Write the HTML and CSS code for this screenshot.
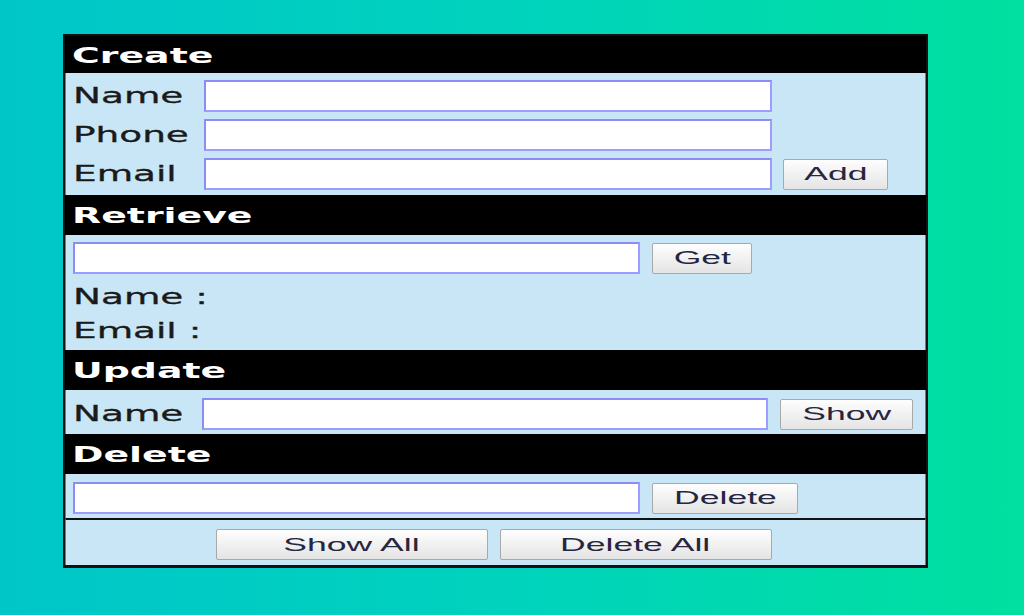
FILE: index.html
```html
<!DOCTYPE html>
<html>
<head>
<meta charset="utf-8">
<title>CRUD</title>
<link rel="stylesheet" href="styles.css">
</head>
<body>
<div class="panel">
  <div class="head"><span class="sx">Create</span></div>
  <div class="body create">
    <div class="row"><label class="lbl"><span class="sx">Name</span></label><input class="field w568" type="text"></div>
    <div class="row"><label class="lbl"><span class="sx">Phone</span></label><input class="field w568" type="text"></div>
    <div class="row"><label class="lbl"><span class="sx">Email</span></label><input class="field w568" type="text"><button class="btn b105"><span class="bx">Add</span></button></div>
  </div>

  <div class="head"><span class="sx">Retrieve</span></div>
  <div class="body retrieve">
    <div class="row"><input class="field w567" type="text"><button class="btn b100"><span class="bx">Get</span></button></div>
    <div class="info"><span class="sx">Name :</span></div>
    <div class="info"><span class="sx">Email :</span></div>
  </div>

  <div class="head"><span class="sx">Update</span></div>
  <div class="body single">
    <div class="row"><label class="lbl lbl2"><span class="sx">Name</span></label><input class="field w566" type="text"><button class="btn b133"><span class="bx">Show</span></button></div>
  </div>

  <div class="head"><span class="sx">Delete</span></div>
  <div class="body single">
    <div class="row"><input class="field w567" type="text"><button class="btn b146"><span class="bx">Delete</span></button></div>
  </div>

  <div class="body footer">
    <button class="btn b272"><span class="bx">Show All</span></button>
    <button class="btn b272"><span class="bx">Delete All</span></button>
  </div>
</div>
</body>
</html>
```
FILE: styles.css
```css
html, body {
  margin: 0;
  padding: 0;
  height: 100%;
}
body {
  background: linear-gradient(90deg, #00c6c9 0%, #00d3bd 50%, #00e09f 100%);
  font-family: "DejaVu Sans", sans-serif;
  overflow: hidden;
}
.panel {
  box-sizing: border-box;
  width: 865px;
  margin: 34px 0 0 63px;
  border: 2px solid #111;
  border-bottom-width: 3px;
  background: #c8e6f5;
}
.head {
  background: #000;
  color: #fff;
  font-weight: bold;
  font-size: 22px;
  height: 40px;
  display: flex;
  align-items: center;
  padding-left: 7px;
  box-sizing: border-box;
}
.panel > .head:first-child {
  height: 37px;
  padding-top: 2px;
}
.sx {
  display: inline-block;
  transform: scaleX(1.7);
  transform-origin: left center;
  white-space: nowrap;
}
.head .sx {
  transform: scaleX(1.72);
}
.body {
  background: #c8e6f5;
  padding-left: 7px;
  border-left: 1px solid #6b7d86;
  border-right: 1px solid #6b7d86;
}
.create {
  padding-top: 7px;
  padding-bottom: 5px;
  display: flex;
  flex-direction: column;
  gap: 7px;
}
.row {
  display: flex;
  align-items: center;
  height: 32px;
}
.lbl {
  width: 131px;
  font-size: 22px;
  color: #1a1a1a;
  line-height: 32px;
  -webkit-text-stroke: 0.3px #1a1a1a;
}
.lbl2 {
  width: 129px;
}
.field {
  box-sizing: border-box;
  height: 32px;
  margin: 0;
  border: 2px solid #9d9dff;
  border-top-color: #8c8cf5;
  border-left-color: #8c8cf5;
  background: #fff;
  outline: none;
  padding: 0 4px;
}
.w568 { width: 568px; }
.w567 { width: 567px; }
.w566 { width: 566px; }
.btn {
  box-sizing: border-box;
  height: 31px;
  margin: 0 0 0 12px;
  padding: 0;
  border: 1px solid #a9a9a9;
  border-radius: 2px;
  background: linear-gradient(#fefefe, #f1f1f1 50%, #e4e4e4);
  font-family: "Liberation Sans", Arial, sans-serif;
  font-size: 19px;
  color: #262640;
  display: flex;
  align-items: center;
  justify-content: center;
}
.bx {
  display: inline-block;
  transform: scaleX(1.87);
  transform-origin: center center;
  white-space: nowrap;
}
.create .btn { margin-left: 11px; }
.b105 { width: 105px; }
.b100 { width: 100px; }
.b133 { width: 133px; }
.b146 { width: 146px; }
.b272 { width: 272px; margin: 0; }
.retrieve {
  padding-top: 7px;
  padding-bottom: 2px;
}
.retrieve .row { margin-bottom: 6px; }
.info {
  height: 34px;
  line-height: 34px;
  font-size: 22px;
  color: #1a1a1a;
  -webkit-text-stroke: 0.3px #1a1a1a;
}
.single {
  padding-top: 8px;
  padding-bottom: 4px;
}
.footer {
  border-top: 2px solid #111;
  padding: 9px 4px 5px 0;
  display: flex;
  justify-content: center;
  gap: 12px;
}
```
